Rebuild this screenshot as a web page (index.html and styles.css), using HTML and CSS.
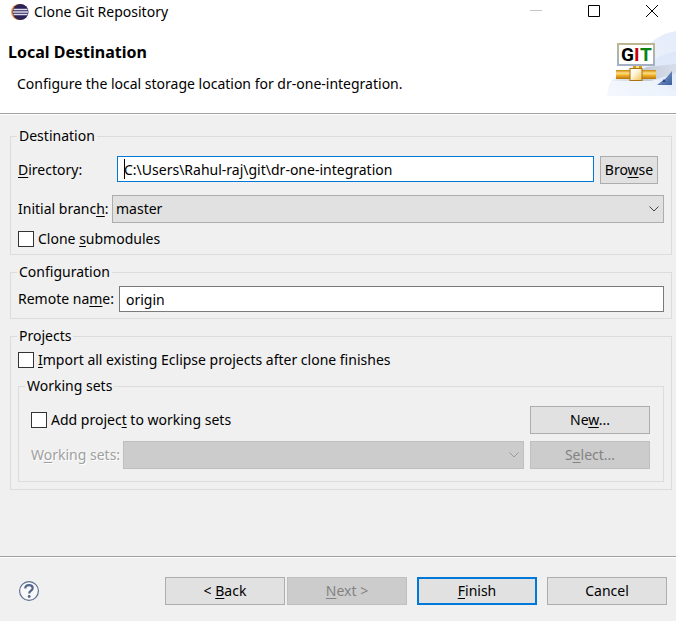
FILE: index.html
```html
<!DOCTYPE html>
<html lang="en">
<head>
<meta charset="utf-8">
<meta name="viewport" content="width=device-width, initial-scale=1">
<title>Clone Git Repository</title>
<link rel="stylesheet" href="styles.css">
</head>
<body>
<header class="head">
  <div class="titlebar">
    <svg class="app-icon" width="18" height="18" viewBox="0 0 18 18" aria-hidden="true">
      <circle cx="8" cy="9" r="8" fill="#f39a3c"/>
      <circle cx="9.500" cy="9" r="8" fill="#2c2255"/>
      <path d="M2.500 6.500h14M2 9h15M2.500 11.500h14" stroke="#dcdcf0" stroke-width="1.500"/>
    </svg>
    <span class="title">Clone Git Repository</span>
    <div class="window-controls">
      <button class="wc" type="button" aria-label="Minimize"><svg width="12" height="12" viewBox="0 0 12 12"><path d="M0 5.500h12" stroke="#c4c4c4"/></svg></button>
      <button class="wc" type="button" aria-label="Maximize"><svg width="12" height="12" viewBox="0 0 12 12"><path d="M.5.5h11v11H.5z" fill="none" stroke="#000"/></svg></button>
      <button class="wc" type="button" aria-label="Close"><svg width="12" height="12" viewBox="0 0 12 12"><path d="M0 0l12 12M12 0L0 12" fill="none" stroke="#000"/></svg></button>
    </div>
  </div>
  <div class="banner">
    <div class="banner-text">
      <h1>Local Destination</h1>
      <p>Configure the local storage location for dr-one-integration.</p>
    </div>
    <svg class="banner-art" width="69" height="65" viewBox="0 0 69 65" role="img" aria-label="GIT">
      <defs>
        <linearGradient id="sky" x1="0" y1="1" x2="1" y2="0"><stop offset="0" stop-color="#f4f8fd"/><stop offset="1" stop-color="#e4ecfa"/></linearGradient>
        <linearGradient id="haze" x1="0" y1="0" x2="0" y2="1"><stop offset="0" stop-color="#dce7f9"/><stop offset="1" stop-color="#e6eefa"/></linearGradient>
        <linearGradient id="shade" x1="0" y1="0" x2="1" y2="0"><stop offset="0" stop-color="#ccd0d8" stop-opacity="0.200"/><stop offset=".5" stop-color="#c3c8d2"/><stop offset="1" stop-color="#ccd2de" stop-opacity=".5"/></linearGradient>
        <linearGradient id="pipe" x1="0" y1="0" x2="0" y2="1"><stop offset="0" stop-color="#c8860a"/><stop offset=".35" stop-color="#ffdf80"/><stop offset=".6" stop-color="#eeb02c"/><stop offset="1" stop-color="#b97506"/></linearGradient>
        <linearGradient id="joint" x1="0" y1="0" x2="1" y2="1"><stop offset="0" stop-color="#fff"/><stop offset=".4" stop-color="#fff6dc"/><stop offset="1" stop-color="#efbf4e"/></linearGradient>
        <linearGradient id="frame" x1="0" y1="0" x2="0" y2="1"><stop offset="0" stop-color="#bdb790"/><stop offset="1" stop-color="#a3b0c4"/></linearGradient>
        <linearGradient id="corner" x1="0" y1="0" x2="1" y2="1"><stop offset="0" stop-color="#8fa8cc"/><stop offset="1" stop-color="#3a5f9f"/></linearGradient>
      </defs>
      <path d="M0 65C1 54 4 48 12 42C30 38 34 6 69 0V65Z" fill="url(#sky)"/>
      <path d="M40 42C42 30 52 23 69 21V60C60 56 52 50 40 42Z" fill="url(#haze)"/>
      <path d="M4 50L40 36L69 33V42L44 50Z" fill="url(#shade)"/>
      <rect x="26" y="34" width="9" height="5" fill="#d99a1e"/>
      <rect x="29" y="34" width="3" height="5" fill="#ffe08c"/>
      <rect x="9" y="39" width="40" height="9" fill="url(#pipe)"/>
      <rect x="23" y="37.500" width="12" height="12" fill="url(#joint)" stroke="#a87312"/>
      <rect x="11" y="13" width="36" height="21" fill="#fff" stroke="url(#frame)" stroke-width="2"/>
      <text y="30" class="git"><tspan x="14">G</tspan><tspan x="27" class="git-i">I</tspan><tspan x="33" class="git-t">T</tspan></text>
      <path d="M65 40V54H50C54 51 55 50 57 49L60 46Z" fill="url(#corner)"/>
      <path d="M55 51l2-3 2 3" fill="#274a86"/>
    </svg>
  </div>
</header>

<main class="content">
  <fieldset class="group destination">
    <legend>Destination</legend>
    <div class="row">
      <label class="label-dir" for="dir"><u>D</u>irectory:</label>
      <input class="text focused" id="dir" type="text" value="C:\Users\Rahul-raj\git\dr-one-integration">
      <button class="btn browse" type="button">Bro<u>w</u>se</button>
    </div>
    <div class="row">
      <label class="label-branch" for="branch">Initial branc<u>h</u>:</label>
      <span class="combo"><select id="branch"><option>master</option></select>
        <svg width="10" height="6" viewBox="0 0 10 6" aria-hidden="true"><path d="M.5.5L5 5L9.500.5" fill="none" stroke="#444"/></svg></span>
    </div>
    <label class="check"><input type="checkbox"><span>Clone <u>s</u>ubmodules</span></label>
  </fieldset>

  <fieldset class="group configuration">
    <legend>Configuration</legend>
    <div class="row">
      <label class="label-remote" for="remote">Remote na<u>m</u>e:</label>
      <input class="text" id="remote" type="text" value="origin">
    </div>
  </fieldset>

  <fieldset class="group">
    <legend>Projects</legend>
    <label class="check"><input type="checkbox"><span><u>I</u>mport all existing Eclipse projects after clone finishes</span></label>
    <fieldset class="group sets">
      <legend>Working sets</legend>
      <div class="row">
        <label class="check grow"><input type="checkbox"><span>Add projec<u>t</u> to working sets</span></label>
        <button class="btn" type="button">Ne<u>w</u>...</button>
      </div>
      <div class="row">
        <label class="label-sets" for="sets">W<u>o</u>rking sets:</label>
        <span class="combo"><select id="sets" disabled></select>
          <svg width="10" height="6" viewBox="0 0 10 6" aria-hidden="true"><path d="M.5.5L5 5L9.500.5" fill="none" stroke="#999"/></svg></span>
        <button class="btn" type="button" disabled>S<u>e</u>lect...</button>
      </div>
    </fieldset>
  </fieldset>
</main>

<footer class="foot">
  <button class="help" type="button" aria-label="Help">
    <svg width="20" height="20" viewBox="0 0 20 20"><circle cx="10" cy="10" r="9.400" fill="#f8f8fa" stroke="#5d6f91" stroke-width="1.200"/><path d="M6.300 7.600C6.300 5.200 7.800 4.200 10 4.200S13.700 5.400 13.700 7.200C13.700 9.700 10.200 9.800 10.200 12.600" fill="none" stroke="#53668b" stroke-width="2.200"/><circle cx="10.200" cy="15.500" r="1.400" fill="#53668b"/></svg>
  </button>
  <div class="nav">
    <button class="btn" type="button">&lt; <u>B</u>ack</button>
    <button class="btn" type="button" disabled><u>N</u>ext &gt;</button>
  </div>
  <button class="btn primary" type="button"><u>F</u>inish</button>
  <button class="btn" type="button">Cancel</button>
</footer>
</body>
</html>
```
FILE: styles.css
```css
* {
  box-sizing: border-box;
}

body {
  margin: 0;
  min-height: 100vh;
  display: flex;
  flex-direction: column;
  background: #f0f0f0;
  color: #000;
  font: 14px/20px "Noto Sans", "Open Sans", sans-serif;
}

button,
input,
select {
  margin: 0;
  font: inherit;
  color: inherit;
}

u {
  text-underline-offset: 2px;
  text-decoration-skip-ink: none;
}

.head {
  background: #fff;
  border-bottom: 1px solid #a0a0a0;
  box-shadow: 0 1px 0 #fff;
}

.titlebar {
  display: flex;
  align-items: center;
  height: 24px;
  padding-left: 11px;
}

.title {
  flex: 1;
  margin-left: 5px;
}

.window-controls {
  display: flex;
  margin-right: -5px;
}

.wc {
  width: 58px;
  height: 24px;
  padding: 0 0 2px;
  border: 0;
  background: none;
}

.wc svg {
  display: block;
  margin: 0 auto;
}

.banner {
  display: flex;
  justify-content: space-between;
  padding: 7px 0 17px;
}

.banner-text {
  padding: 11px 0 0 8px;
}

h1 {
  margin: 0;
  font-size: 16px;
  line-height: 20px;
}

p {
  margin: 12px 0 0 9px;
}

.banner-art {
  flex: none;
  display: block;
}

.git {
  font: bold 19px Roboto, "Liberation Sans", sans-serif;
}

.git-i {
  fill: #c8000c;
}

.git-t {
  fill: #0b8310;
}

.content {
  display: flex;
  flex-direction: column;
  gap: 7px;
  padding: 12px 4px 12px 10px;
}

.group {
  min-width: 0;
  margin: 0;
  padding: 4px 7px 7px;
  border: 1px solid #dcdcdc;
}

.destination {
  padding: 10px 7px 5px;
}

.configuration {
  padding-bottom: 6px;
}

.group legend {
  margin-left: -1px;
  padding: 0 2px;
}

.row {
  display: flex;
  align-items: center;
  gap: 6px;
}

.row + .row {
  margin-top: 11px;
}

.row + .check {
  margin-top: 6px;
}

.row label {
  white-space: nowrap;
}

.label-dir {
  width: 93px;
}

.label-branch {
  width: 88px;
}

.label-remote {
  width: 95px;
}

.label-sets {
  width: 86px;
  color: #a0a0a0;
  text-shadow: 1px 1px 0 #fff;
}

.text {
  flex: 1;
  min-width: 0;
  height: 26px;
  padding: 0 6px;
  border: 1px solid #7a7a7a;
  border-radius: 0;
  background: #fff;
}

.focused {
  align-self: flex-start;
  border-color: #0078d7;
  background: linear-gradient(#000, #000) 6px 50% / 1px 20px no-repeat #fff;
  outline: 0;
}

.btn {
  flex: none;
  width: 120px;
  height: 28px;
  padding: 0;
  border: 1px solid #adadad;
  border-radius: 0;
  background: #e1e1e1;
}

.btn:disabled {
  border-color: #bfbfbf;
  background: #ccc;
  color: #838383;
}

.browse {
  width: 58px;
  margin-right: 6px;
}

.primary {
  border: 2px solid #0078d7;
}

.combo {
  position: relative;
  flex: 1;
  display: flex;
}

.combo select {
  flex: 1;
  height: 28px;
  padding: 0 3px;
  border: 1px solid #adadad;
  border-radius: 0;
  background: #e1e1e1;
  appearance: none;
}

.combo select:disabled {
  border-color: #bfbfbf;
  background: #ccc;
  opacity: 1;
}

.combo svg {
  position: absolute;
  right: 5px;
  top: 11px;
  pointer-events: none;
}

.check {
  display: flex;
  align-items: center;
  gap: 4px;
}

.check input {
  flex: none;
  width: 16px;
  height: 16px;
  border: 1px solid #333;
  background: #fff;
  appearance: none;
}

.grow {
  flex: 1;
}

.sets {
  margin-top: 6px;
  padding: 10px 13px 12px 12px;
}

.sets > legend {
  margin-left: -6px;
}

.sets .row + .row {
  margin-top: 7px;
}

.foot {
  display: flex;
  align-items: center;
  gap: 10px;
  margin-top: auto;
  padding: 20px 9px 16px 19px;
  border-top: 1px solid #a0a0a0;
  box-shadow: inset 0 1px 0 #fff;
}

.help {
  display: flex;
  margin-right: auto;
  padding: 0;
  border: 0;
  background: none;
}

.nav {
  display: flex;
  gap: 2px;
}
```
